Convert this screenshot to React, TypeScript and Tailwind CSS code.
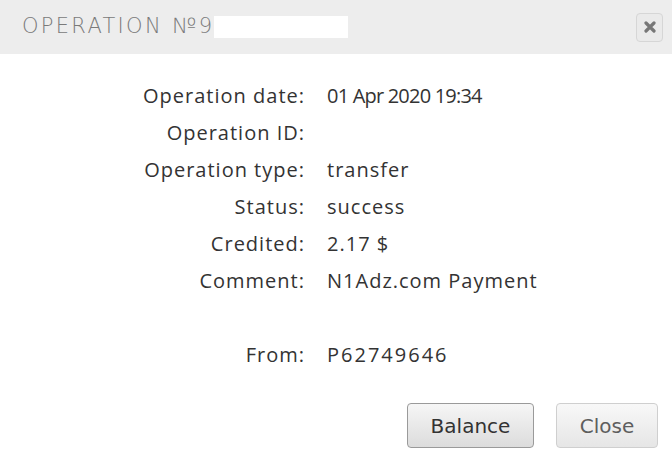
import React from "react";

const rows: [string, string, string][] = [
  ["Operation date:", "01 Apr 2020 19:34", "tracking-[-0.8px]"],
  ["Operation ID:", "", "tracking-[1px]"],
  ["Operation type:", "transfer", "tracking-[1px]"],
  ["Status:", "success", "tracking-[1px]"],
  ["Credited:", "2.17 $", "tracking-[1px]"],
  ["Comment:", "N1Adz.com Payment", "tracking-[1px]"],
];

function Row({ label, value, vcls }: { label: string; value: string; vcls: string }) {
  return (
    <div className="flex h-[36.9px] items-center">
      <div className="w-[305px] shrink-0 text-right tracking-[1px]">{label}</div>
      <div className={"pl-[22px] " + vcls}>{value}</div>
    </div>
  );
}

export default function App() {
  return (
    <div className="w-[672px] h-[461px] bg-white overflow-hidden">
      <div className="h-[54px] bg-[#ededed] flex items-center justify-between pl-[22px] pr-[9px]">
        <div className="flex items-center">
          <span
            className="text-[#7a7a7a] text-[21px] tracking-[2.3px]"
            style={{ fontFamily: '"DejaVu Sans", sans-serif', fontWeight: 300 }}
          >
            OPERATION №9
          </span>
          <span className="w-[134px] h-[22px] bg-white" />
        </div>
        <button className="w-[27px] h-[29px] rounded-[4px] border border-[#d6d6d6] bg-[#eaeaea] flex items-center justify-center">
          <svg width="12" height="12" viewBox="0 0 12 12">
            <path d="M2 2 L10 10 M10 2 L2 10" stroke="#777" strokeWidth="3.2" strokeLinecap="round" />
          </svg>
        </button>
      </div>
      <div
        className="pt-[24px] text-[#333] text-[20px]"
        style={{ fontFamily: '"Open Sans", sans-serif' }}
      >
        {rows.map(([l, v, c]) => (
          <Row key={l} label={l} value={v} vcls={c} />
        ))}
        <div className="h-[36.9px]" />
        <Row label="From:" value="P62749646" vcls="tracking-[2px]" />
      </div>
      <div
        className="flex justify-end gap-[22px] pr-[14px] pt-[30px]"
        style={{ fontFamily: '"DejaVu Sans", sans-serif' }}
      >
        <button className="w-[127px] h-[45px] rounded-[4px] border border-[#9a9a9a] bg-gradient-to-b from-[#f6f6f6] to-[#dcdcdc] text-[#333] text-[20px]">
          Balance
        </button>
        <button className="w-[102px] h-[45px] rounded-[4px] border border-[#cfcfcf] bg-gradient-to-b from-[#f8f8f8] to-[#e6e6e6] text-[#5e5e5e] text-[20px]">
          Close
        </button>
      </div>
    </div>
  );
}
